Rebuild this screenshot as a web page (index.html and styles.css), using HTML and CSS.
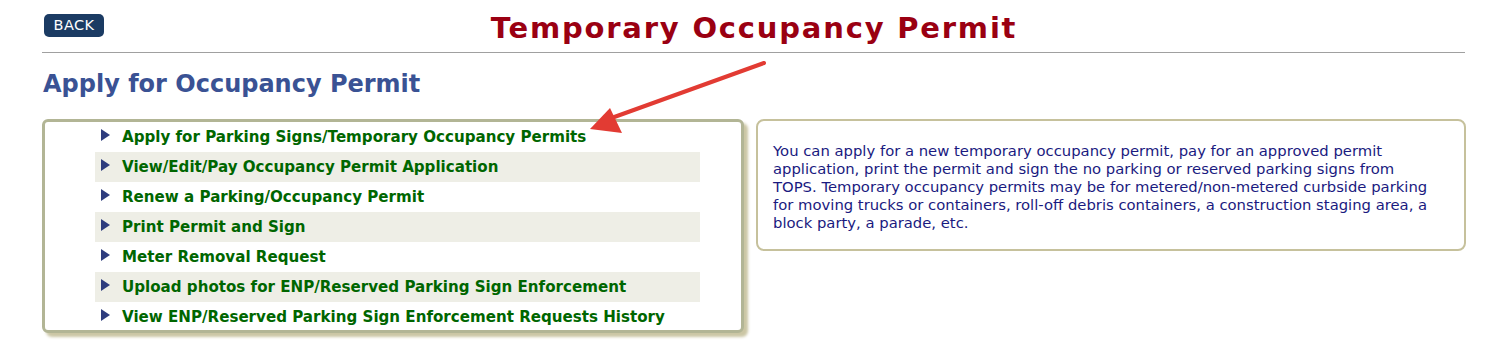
FILE: index.html
```html
<!DOCTYPE html>
<html lang="en">
<head>
<meta charset="utf-8">
<title>Temporary Occupancy Permit</title>
<link rel="stylesheet" href="styles.css">
</head>
<body>
<div class="page">
  <header class="top">
    <a class="back" href="#">BACK</a>
    <h1 class="title">Temporary Occupancy Permit</h1>
  </header>
  <hr class="rule">
  <h2 class="subtitle">Apply for Occupancy Permit</h2>
  <div class="content">
    <div class="menu-box">
      <ul class="menu">
        <li class="item"><span class="tri"></span><a href="#">Apply for Parking Signs/Temporary Occupancy Permits</a></li>
        <li class="item alt"><span class="tri"></span><a href="#">View/Edit/Pay Occupancy Permit Application</a></li>
        <li class="item"><span class="tri"></span><a href="#">Renew a Parking/Occupancy Permit</a></li>
        <li class="item alt"><span class="tri"></span><a href="#">Print Permit and Sign</a></li>
        <li class="item"><span class="tri"></span><a href="#">Meter Removal Request</a></li>
        <li class="item alt"><span class="tri"></span><a href="#">Upload photos for ENP/Reserved Parking Sign Enforcement</a></li>
        <li class="item"><span class="tri"></span><a href="#">View ENP/Reserved Parking Sign Enforcement Requests History</a></li>
      </ul>
    </div>
    <div class="info-box">
      <p>You can apply for a new temporary occupancy permit, pay for an approved permit application, print the permit and sign the no parking or reserved parking signs from TOPS. Temporary occupancy permits may be for metered/non-metered curbside parking for moving trucks or containers, roll-off debris containers, a construction staging area, a block party, a parade, etc.</p>
    </div>
  </div>
  <svg class="arrow" width="200" height="90" viewBox="0 0 200 90">
    <line x1="194" y1="7" x2="36" y2="64" stroke="#e23b33" stroke-width="4" stroke-linecap="round"/>
    <polygon points="20,73 40,52 52,77" fill="#e23b33"/>
  </svg>
</div>
</body>
</html>
```

FILE: styles.css
```css
html, body {
  margin: 0;
  padding: 0;
  background: #ffffff;
}
body {
  font-family: "DejaVu Sans", Verdana, sans-serif;
}
.page {
  position: relative;
  width: 1508px;
  height: 352px;
  padding: 0 42px;
  box-sizing: border-box;
}
.top {
  position: relative;
  height: 52px;
  display: flex;
  align-items: flex-start;
}
.back {
  display: block;
  margin: 14px 0 0 2px;
  width: 60px;
  height: 23px;
  line-height: 23px;
  background: #1b3b63;
  color: #ffffff;
  border-radius: 5px;
  font-family: "DejaVu Sans", Verdana, sans-serif;
  font-size: 14.5px;
  text-align: center;
  text-decoration: none;
  letter-spacing: 0.4px;
}
.title {
  position: absolute;
  left: 0;
  right: 0;
  top: 9px;
  margin: 0;
  text-align: center;
  font-size: 29px;
  line-height: 38px;
  font-weight: bold;
  color: #9a0012;
  letter-spacing: 1.8px;
  pointer-events: none;
}
.rule {
  margin: 0;
  border: 0;
  border-top: 1px solid #a0a0a0;
  height: 0;
  width: 1423px;
}
.subtitle {
  margin: 15px 0 0 1px;
  font-size: 24px;
  line-height: 32px;
  color: #3a5294;
  font-weight: bold;
}
.content {
  display: flex;
  align-items: flex-start;
  gap: 12px;
  margin-top: 19px;
}
.menu-box {
  width: 696px;
  height: 208px;
  border: 3px solid #b2b595;
  border-radius: 6px;
  box-shadow: 4px 4px 3px #cbc6a4;
  background: #ffffff;
  padding: 0;
}
.menu {
  list-style: none;
  margin: 0;
  padding: 0 0 0 50px;
}
.item {
  width: 605px;
  height: 30px;
  display: flex;
  align-items: center;
  font-size: 15.1px;
  font-weight: bold;
}
.item.alt {
  background: #eeeee6;
}
.tri {
  width: 0;
  height: 0;
  border-top: 6px solid transparent;
  border-bottom: 6px solid transparent;
  border-left: 9px solid #2e3c7e;
  margin: -4px 12px 0 6px;
}
.item a {
  color: #006600;
  text-decoration: none;
}
.info-box {
  width: 691px;
  height: 128px;
  border: 2px solid #c6c19c;
  border-radius: 8px;
  padding: 0 0 0 15px;
}
.info-box p {
  width: 660px;
  margin: 21px 0 0 0;
  font-size: 14.8px;
  line-height: 18px;
  color: #1a1a80;
}
.arrow {
  position: absolute;
  left: 570px;
  top: 56px;
}
```
